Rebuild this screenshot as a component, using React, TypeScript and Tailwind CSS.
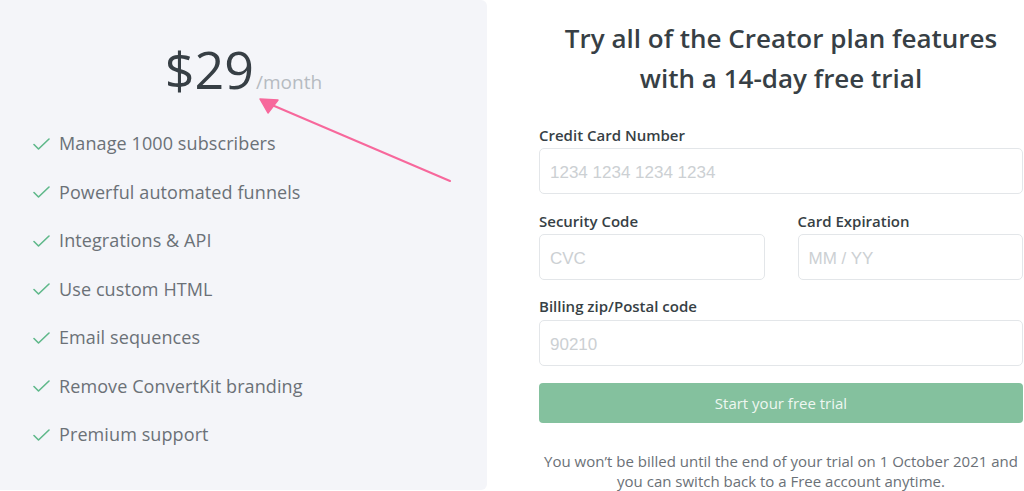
import React from "react";

const features = [
  "Manage 1000 subscribers",
  "Powerful automated funnels",
  "Integrations & API",
  "Use custom HTML",
  "Email sequences",
  "Remove ConvertKit branding",
  "Premium support",
];

function Check() {
  return (
    <svg width="17" height="12" viewBox="0 0 17 12" fill="none" className="shrink-0">
      <path d="M1 6.5 L5.5 11 L16 1" stroke="#5fb88a" strokeWidth="1.6" strokeLinecap="round" strokeLinejoin="round" />
    </svg>
  );
}

function Field({ placeholder, className = "" }: { placeholder: string; className?: string }) {
  return (
    <div
      className={`h-[46px] rounded-[5px] border border-[#e3e6e9] bg-white flex items-center pl-[10px] pt-[3px] text-[17px] text-[#ccd0d3] ${className}`}
      style={{ fontFamily: '"Liberation Sans", Arial, sans-serif' }}
    >
      {placeholder}
    </div>
  );
}

export default function App() {
  return (
    <div
      className="w-[1024px] h-[491px] bg-white flex overflow-hidden"
      style={{ fontFamily: '"Open Sans", "Noto Sans", sans-serif' }}
    >
      <div className="relative w-[487px] h-[490px] shrink-0 bg-[#f4f5f9] rounded-r-[6px]">
        <div className="flex items-baseline justify-center pt-[37px]">
          <span className="text-[52px] leading-[64px] text-[#373f45]">$29</span>
          <span className="text-[19px] text-[#b6bbc1] ml-[2px]">/month</span>
        </div>
        <ul className="pl-[33px] pt-[30px] flex flex-col gap-[23px]">
          {features.map((f) => (
            <li key={f} className="flex items-center h-[25.5px] gap-[9px] text-[18px] tracking-[0.1px] text-[#6b7177]">
              <Check />
              <span>{f}</span>
            </li>
          ))}
        </ul>
        <svg className="absolute left-0 top-0" width="487" height="490" viewBox="0 0 487 490" fill="none">
          <path d="M450 181 L272 105" stroke="#f7689c" strokeWidth="2" strokeLinecap="round" />
          <path d="M260 99 L268 113 L278 100 Z" fill="#f7689c" stroke="#f7689c" strokeWidth="1.5" strokeLinejoin="round" />
        </svg>
      </div>

      <div className="ml-[52px] w-[484px] flex flex-col">
        <h1 className="pt-[18px] text-center text-[26px] leading-[40px] font-semibold text-[#373f45]">
          Try all of the Creator plan features
          <br />
          with a 14-day free trial
        </h1>

        <label className="mt-[27px] text-[15px] leading-[20px] font-semibold text-[#373f45]">Credit Card Number</label>
        <Field placeholder="1234 1234 1234 1234" className="mt-[3px]" />

        <div className="mt-[17px] flex gap-[33px]">
          <div className="flex-1 flex flex-col">
            <label className="text-[15px] leading-[20px] font-semibold text-[#373f45]">Security Code</label>
            <Field placeholder="CVC" className="mt-[3px]" />
          </div>
          <div className="flex-1 flex flex-col">
            <label className="text-[15px] leading-[20px] font-semibold text-[#373f45]">Card Expiration</label>
            <Field placeholder="MM / YY" className="mt-[3px]" />
          </div>
        </div>

        <label className="mt-[16px] text-[15px] leading-[20px] font-semibold text-[#373f45]">Billing zip/Postal code</label>
        <Field placeholder="90210" className="mt-[4px]" />

        <button className="mt-[17px] h-[40px] rounded-[4px] bg-[#84c19e] text-[#eef7f1] text-[15px] flex items-center justify-center">
          Start your free trial
        </button>

        <p className="mt-[28px] text-center text-[15px] leading-[20px] text-[#6b7177]">
          You won’t be billed until the end of your trial on 1 October 2021 and
          <br />
          you can switch back to a Free account anytime.
        </p>
      </div>
    </div>
  );
}
